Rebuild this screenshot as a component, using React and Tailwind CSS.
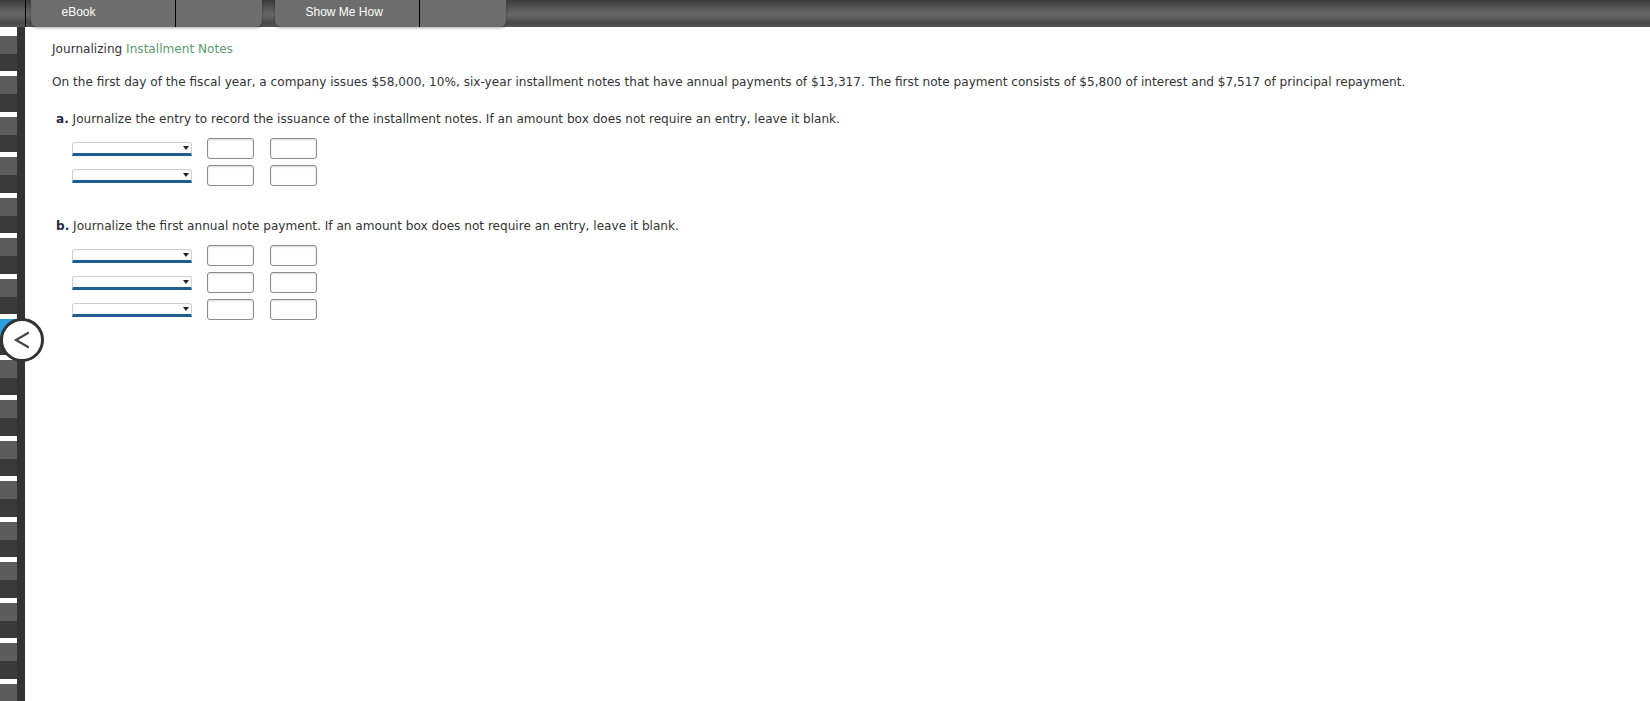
import React from 'react';

const font = { fontFamily: '"DejaVu Sans", Verdana, sans-serif' };

function Strip() {
  // left side rail of step markers
  const blocks = Array.from({ length: 16 }, (_, i) => i);
  return (
    <div className="flex w-[25px] shrink-0">
      <div className="flex w-[17px] flex-col bg-white">
        <div className="h-[9px] shrink-0 bg-white" />
        <div className="h-[18px] shrink-0 bg-[#5c5c5c]" />
        <div className="h-[17px] shrink-0 bg-[#3a3a3a]" />
        {blocks.map((i) => (
          <div key={i} className="flex h-[40.5px] shrink-0 flex-col">
            <div className="h-[5px] shrink-0 bg-white" />
            <div className={i === 6 ? 'h-[18px] shrink-0 bg-[#2a9fd9]' : 'h-[18px] shrink-0 bg-[#5c5c5c]'} />
            <div className="flex-1 bg-[#3a3a3a]" />
          </div>
        ))}
      </div>
      <div className="w-[8px] bg-[#333333]" />
    </div>
  );
}

function Tab({ label }) {
  return (
    <div className="flex h-[27px] w-[231px] shrink-0 rounded-b-[6px] bg-[#6d6d6d] shadow-[0_1px_3px_rgba(0,0,0,0.35)]">
      <div className="flex h-full w-[145px] items-center border-r border-black pl-[31px] pb-[3px] text-[12px] text-white" style={{ fontFamily: '"Liberation Sans", Arial, sans-serif' }}>
        {label}
      </div>
      <div className="flex-1" />
    </div>
  );
}

function Row() {
  return (
    <div className="flex items-center">
      <div className="relative ml-[20px] h-[14px] w-[120px] rounded-t-[3px] border border-b-[3px] border-[#cfcfcf] border-b-[#1f5f8f] bg-white">
        <div className="absolute right-[2px] top-[3px] h-0 w-0 border-x-[3px] border-t-[4px] border-x-transparent border-t-[#222]" />
      </div>
      <div className="ml-[15px] h-[21px] w-[47px] rounded-[3px] border border-[#8a8a8a] bg-white shadow-[inset_0_1px_2px_rgba(0,0,0,0.15)]" />
      <div className="ml-[16px] h-[21px] w-[47px] rounded-[3px] border border-[#8a8a8a] bg-white shadow-[inset_0_1px_2px_rgba(0,0,0,0.15)]" />
    </div>
  );
}

export default function App() {
  return (
    <div className="relative flex h-[701px] w-[1650px] flex-col overflow-hidden bg-white">
      <div className="flex h-[27px] shrink-0 bg-[linear-gradient(#3b3b3b_0%,#5a5a5a_35%,#676767_55%,#4a4a4a_85%,#555_100%)]">
        <div className="w-[25px] shrink-0" />
        <div className="w-px shrink-0 bg-black" />
        <div className="w-[4.5px] shrink-0" />
        <Tab label="eBook" />
        <div className="w-[13px] shrink-0" />
        <Tab label="Show Me How" />
      </div>
      <div className="flex flex-1">
        <Strip />
        <div className="flex-1 pl-[27px] pt-[15px] text-[12.1px] leading-[15px] text-[#333]" style={font}>
          <div>
            Journalizing <span className="text-[#5b9b6e]">Installment Notes</span>
          </div>
          <p className="mt-[18px]">
            On the first day of the fiscal year, a company issues $58,000, 10%, six-year installment notes that have annual payments of $13,317. The first note payment consists of $5,800 of interest and $7,517 of principal repayment.
          </p>
          <p className="ml-[4px] mt-[22px]">
            <b className="text-[#1f2a44]">a.</b> Journalize the entry to record the issuance of the installment notes. If an amount box does not require an entry, leave it blank.
          </p>
          <div className="mt-[11px] flex flex-col gap-[6px]">
            <Row />
            <Row />
          </div>
          <p className="ml-[4px] mt-[33px]">
            <b className="text-[#1f2a44]">b.</b> Journalize the first annual note payment. If an amount box does not require an entry, leave it blank.
          </p>
          <div className="mt-[11px] flex flex-col gap-[6px]">
            <Row />
            <Row />
            <Row />
          </div>
        </div>
      </div>
      <div className="absolute left-0 top-[318px] flex h-[44px] w-[44px] items-center justify-center rounded-full border-[3px] border-[#333] bg-white">
        <svg width="22" height="22" viewBox="0 0 22 22" fill="none" stroke="#444" strokeWidth="2.2" strokeLinecap="round">
          <path d="M17 4 L5 11 L17 18" />
        </svg>
      </div>
    </div>
  );
}
